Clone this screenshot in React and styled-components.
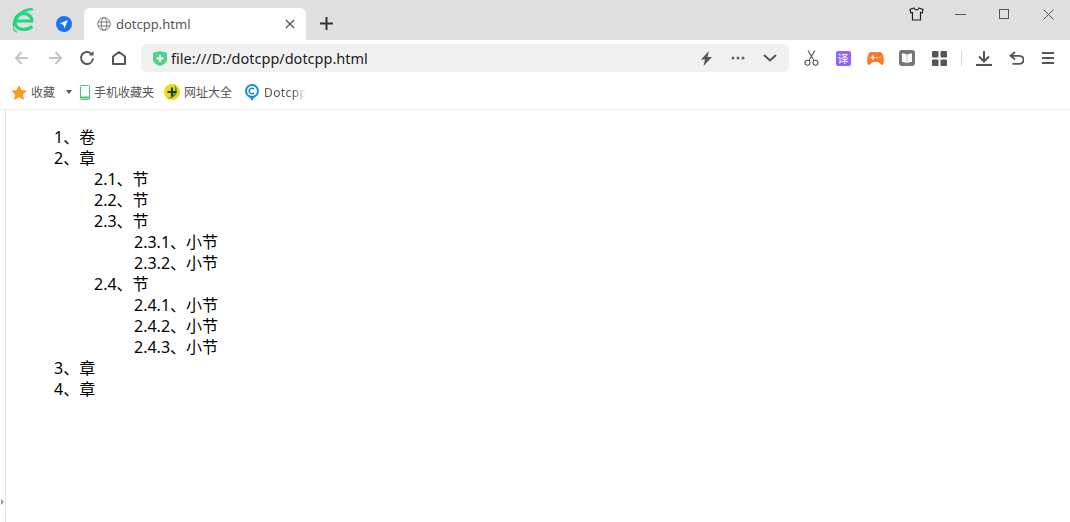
import React from 'react'
import styled, { createGlobalStyle } from 'styled-components'

function App() {
  return (
    <Page>
      <GlobalStyle />
      <TitleBar>
        <Logo viewBox="0 0 22 25">
          <path d="M3 13h16.800C20 8.500 16 5.500 11.500 5.500 6.500 5.500 3 9 3 13.500c0 5 3.500 8 8.500 8 3.500 0 6.500-1 8.800-3.200" fill="none" stroke="#1fd880" strokeWidth="3.200" />
          <path d="M1.500 20.500C-2 11 7 1 19 0c1.400-.1 2.300.6 2.700 2.200C13.500 1.800 5 8 1.500 20.500z" fill="#1fd880" />
          <path d="M1.500 20.500c.5 1.500 1.500 2.800 3.500 3.700" fill="none" stroke="#1fd880" strokeWidth="1.600" />
        </Logo>
        <PinnedTab>
          <svg width="16" height="16" viewBox="0 0 16 16">
            <circle cx="8" cy="8" r="8" fill="#1b73f0" />
            <path d="M12 4 3.800 7.500l3.500 1.200 1.200 3.500z" fill="#fff" />
          </svg>
        </PinnedTab>
        <Tab>
          <svg width="14" height="14" viewBox="0 0 14 14" fill="none" stroke="#777" strokeWidth="1">
            <circle cx="7" cy="7" r="6.300" />
            <ellipse cx="7" cy="7" rx="2.800" ry="6.300" />
            <path d="M1 5h12M1 9h12" />
          </svg>
          <TabTitle>dotcpp.html</TabTitle>
          <svg width="10" height="10" viewBox="0 0 10 10" stroke="#555" strokeWidth="1.400">
            <path d="M1 1l8 8M9 1l-8 8" />
          </svg>
        </Tab>
        <NewTab>
          <svg width="13" height="13" viewBox="0 0 13 13" stroke="#333" strokeWidth="2">
            <path d="M6.500 0v13M0 6.500h13" />
          </svg>
        </NewTab>
        <WindowControls>
          <WindowButton>
            <svg width="15" height="14" viewBox="0 0 15 14" fill="none" stroke="#222" strokeWidth="1.200">
              <path d="M5 1 1 2.500 1.800 6 3.500 5.500V13h8V5.500l1.700.5.800-3.500L10 1c-.5 2.500-4.500 2.500-5 0z" />
            </svg>
          </WindowButton>
          <WindowButton>
            <svg width="11" height="1" viewBox="0 0 11 1" stroke="#555"><path d="M0 .5h11" /></svg>
          </WindowButton>
          <WindowButton>
            <svg width="10" height="10" viewBox="0 0 10 10" fill="none" stroke="#555"><rect x=".5" y=".5" width="9" height="9" /></svg>
          </WindowButton>
          <WindowButton>
            <svg width="11" height="11" viewBox="0 0 11 11" stroke="#555"><path d="M.5.500l10 10M10.500.500l-10 10" /></svg>
          </WindowButton>
        </WindowControls>
      </TitleBar>

      <Toolbar>
        <ToolButton>
          <StrokeIcon color="#c4c4c4"><path d="M14 9H2M7.500 3 2 9l5.500 6" /></StrokeIcon>
        </ToolButton>
        <ToolButton>
          <StrokeIcon color="#c4c4c4"><path d="M3 9h12M9.500 3 15 9l-5.500 6" /></StrokeIcon>
        </ToolButton>
        <ToolButton>
          <StrokeIcon color="#555"><path d="M15 9.500A6 6 0 1 1 13 4.500" /><path d="M15.500 2v4.500H11" fill="#555" stroke="none" /></StrokeIcon>
        </ToolButton>
        <ToolButton>
          <StrokeIcon color="#555"><path d="M3 15V7.500L9 3l6 4.500V15z" strokeLinejoin="round" /></StrokeIcon>
        </ToolButton>
        <AddressBar>
          <svg width="14" height="15" viewBox="0 0 14 15">
            <path d="M0 1.800 7 0l7 1.800v6.500C14 11.500 10 14 7 15c-3-1-7-3.500-7-6.700z" fill="#4fd28a" />
            <path d="M7 4v7M3.500 7.500h7" stroke="#fff" strokeWidth="2" />
          </svg>
          <AddressText>file:///D:/dotcpp/dotcpp.html</AddressText>
          <AddressAction>
            <svg width="13" height="15" viewBox="0 0 13 15"><path d="M9 0 1 8.500h4L3.500 15 12 6H7.500z" fill="#555" /></svg>
          </AddressAction>
          <AddressAction>
            <svg width="14" height="4" viewBox="0 0 14 4" fill="#666">
              <circle cx="2" cy="2" r="1.500" /><circle cx="7" cy="2" r="1.500" /><circle cx="12" cy="2" r="1.500" />
            </svg>
          </AddressAction>
          <AddressAction>
            <svg width="14" height="8" viewBox="0 0 14 8" fill="none" stroke="#555" strokeWidth="2"><path d="M1 1l6 5.500L13 1" /></svg>
          </AddressAction>
        </AddressBar>
        <ToolSpacer />
        <ToolButton>
          <svg width="15" height="16" viewBox="0 0 15 16" fill="none" stroke="#555" strokeWidth="1.100">
            <circle cx="3.500" cy="12.800" r="2.500" /><circle cx="11.500" cy="12.800" r="2.500" />
            <path d="M4.800 10.800 11 .5M10.200 10.800 4 .5" />
          </svg>
        </ToolButton>
        <ToolButton>
          <TranslateBadge>译</TranslateBadge>
        </ToolButton>
        <ToolButton>
          <svg width="17" height="13" viewBox="0 0 17 13">
            <path d="M4.500 0h8C15 0 16 2 16.500 5c.6 3.500.6 8-1.500 8-1.500 0-2.500-3-4-3H6c-1.500 0-2.500 3-4 3C0 13-.1 8.500.5 5 1 2 2 0 4.500 0z" fill="#ff7a2a" />
            <path d="M4 5.500h3.400M5.700 3.800v3.400M10 5.500h.01M13 5.500h.01" stroke="#fff" strokeWidth="1.300" strokeLinecap="round" />
          </svg>
        </ToolButton>
        <ToolButton>
          <svg width="16" height="16" viewBox="0 0 16 16">
            <rect width="16" height="16" rx="3" fill="#777" />
            <path d="M3 3.500c2 0 4 .4 5 1.500 1-1.100 3-1.500 5-1.500V12c-2 0-4 .3-5 1.200C7 12.300 5 12 3 12z" fill="#fff" />
            <path d="M8 5v8" stroke="#bbb" />
          </svg>
        </ToolButton>
        <ToolButton>
          <svg width="15" height="15" viewBox="0 0 15 15" fill="#555">
            <rect width="6.500" height="6.500" rx="1" /><rect x="8.500" width="6.500" height="6.500" rx="1" />
            <rect y="8.500" width="6.500" height="6.500" rx="1" /><rect x="8.500" y="8.500" width="6.500" height="6.500" rx="1" />
          </svg>
        </ToolButton>
        <ToolDivider />
        <ToolButton>
          <svg width="16" height="15" viewBox="0 0 16 15" fill="none" stroke="#555" strokeWidth="2">
            <path d="M0 14h16M8 0v10M3 5.500l5 5 5-5" />
          </svg>
        </ToolButton>
        <ToolButton>
          <svg width="15" height="14" viewBox="0 0 15 14" fill="none" stroke="#555" strokeWidth="1.800">
            <path d="M6 1 1.500 4.800 6 8.500M2 4.800h8c6 0 6 8 0 8H3.500" />
          </svg>
        </ToolButton>
        <ToolButton>
          <svg width="12" height="12" viewBox="0 0 12 12" stroke="#555" strokeWidth="2"><path d="M0 1h12M0 6h12M0 11h12" /></svg>
        </ToolButton>
      </Toolbar>

      <Bookmarks>
        <svg width="16" height="15" viewBox="0 0 16 15"><path d="M8 0l2.400 5 5.600.7-4.100 3.800 1.100 5.500L8 12.300 3 15l1.100-5.500L0 5.700 5.600 5z" fill="#ff9a1f" /></svg>
        <FavoritesLabel>收藏</FavoritesLabel>
        <Caret />
        <Bookmark $offset={8}>
          <svg width="10" height="15" viewBox="0 0 10 15" fill="none">
            <rect x=".5" y=".5" width="9" height="14" rx="1" stroke="#45c47a" />
            <path d="M1 12.500h8" stroke="#45c47a" strokeWidth="2" />
          </svg>
          手机收藏夹
        </Bookmark>
        <Bookmark $offset={10}>
          <svg width="16" height="16" viewBox="0 0 16 16">
            <circle cx="8" cy="8" r="8" fill="#f2d81c" />
            <path d="M10 .3A8 8 0 0 1 3 14.300C7 13.500 11 10 11 6 11 4 11 2 10 .3z" fill="#4d9a1e" />
            <path d="M8 3.500v9M3.500 8h9" stroke="#14450f" strokeWidth="2.200" />
          </svg>
          网址大全
        </Bookmark>
        <Bookmark $offset={13} $gap={5}>
          <svg width="14" height="17" viewBox="0 0 14 17">
            <path d="M7 0a7 7 0 0 1 2 13.700L7 17l-2-3.300A7 7 0 0 1 7 0z" fill="#1b8ddb" />
            <circle cx="7" cy="7" r="5" fill="#fff" />
            <path d="M9.100 5.200a2.800 2.800 0 1 0 0 3.600" fill="none" stroke="#1b8ddb" strokeWidth="1.600" />
          </svg>
          <FadedTitle>Dotcpp</FadedTitle>
        </Bookmark>
      </Bookmarks>

      <Main>
        <SideRail>
          <RailHandle />
        </SideRail>
        <Content>
          <Outline>
            <li>1、卷</li>
            <li>
              2、章
              <Outline>
                <li>2.1、节</li>
                <li>2.2、节</li>
                <li>
                  2.3、节
                  <Outline>
                    <li>2.3.1、小节</li>
                    <li>2.3.2、小节</li>
                  </Outline>
                </li>
                <li>
                  2.4、节
                  <Outline>
                    <li>2.4.1、小节</li>
                    <li>2.4.2、小节</li>
                    <li>2.4.3、小节</li>
                  </Outline>
                </li>
              </Outline>
            </li>
            <li>3、章</li>
            <li>4、章</li>
          </Outline>
        </Content>
      </Main>
    </Page>
  )
}

const StrokeIcon = ({ color, children }) => (
  <svg width="18" height="18" viewBox="0 0 18 18" fill="none" stroke={color} strokeWidth="2">
    {children}
  </svg>
)

const GlobalStyle = createGlobalStyle`
  html, body {
    margin: 0;
    padding: 0;
    background: #fff;
  }
  body {
    font-family: "Noto Sans", "Noto Sans CJK SC", sans-serif;
  }
`

const Page = styled.div`
  display: flex;
  flex-direction: column;
  height: 522px;
  overflow: hidden;
`

const TitleBar = styled.div`
  display: flex;
  align-items: flex-end;
  height: 40px;
  background: #e0e0e0;
`

const Logo = styled.svg`
  width: 22px;
  height: 25px;
  margin: 0 0 7px 12px;
  flex: none;
`

const PinnedTab = styled.div`
  display: flex;
  align-items: center;
  justify-content: center;
  width: 16px;
  height: 32px;
  margin-left: 22px;
  flex: none;
`

const Tab = styled.div`
  display: flex;
  align-items: center;
  width: 222px;
  height: 32px;
  margin-left: 12px;
  padding: 0 11px 0 13px;
  box-sizing: border-box;
  background: #fff;
  border-radius: 6px 6px 0 0;
  flex: none;
`

const TabTitle = styled.span`
  flex: 1;
  margin-left: 5px;
  font-size: 13px;
  color: #555;
`

const NewTab = styled.div`
  display: flex;
  align-items: center;
  justify-content: center;
  width: 40px;
  height: 32px;
  padding-bottom: 2px;
  box-sizing: border-box;
  flex: none;
`

const WindowControls = styled.div`
  display: flex;
  align-self: flex-start;
  margin-left: auto;
  height: 28px;
`

const WindowButton = styled.div`
  display: flex;
  align-items: center;
  justify-content: center;
  width: 44px;
  height: 28px;
`

const Toolbar = styled.div`
  display: flex;
  align-items: center;
  height: 40px;
  padding: 0 6px 4px 7px;
  box-sizing: border-box;
  background: #fff;
`

const ToolButton = styled.div`
  display: flex;
  align-items: center;
  justify-content: center;
  width: 32px;
  height: 32px;
  flex: none;
`

const AddressBar = styled.div`
  display: flex;
  align-items: center;
  width: 648px;
  height: 28px;
  margin-left: 6px;
  padding: 0 3px 0 12px;
  box-sizing: border-box;
  background: #f1f1f1;
  border-radius: 5px;
  flex: none;
`

const AddressText = styled.span`
  flex: 1;
  margin-left: 4px;
  font-size: 14.500px;
  color: #222;
`

const AddressAction = styled.div`
  display: flex;
  align-items: center;
  justify-content: center;
  width: 32px;
  height: 28px;
`

const ToolSpacer = styled.div`
  width: 6px;
  flex: none;
`

const TranslateBadge = styled.span`
  display: block;
  width: 15px;
  height: 15px;
  line-height: 15px;
  border-radius: 2px;
  background: #8f66f5;
  color: #fff;
  font-size: 11px;
  text-align: center;
`

const ToolDivider = styled.div`
  width: 1px;
  height: 16px;
  margin: 0 6px;
  background: #d8d8d8;
  flex: none;
`

const Bookmarks = styled.div`
  display: flex;
  align-items: center;
  height: 30px;
  padding: 0 0 5px 11px;
  box-sizing: border-box;
  background: #fff;
  border-bottom: 1px solid #eeeeee;
  font-size: 12px;
  color: #555;
`

const FavoritesLabel = styled.span`
  margin-left: 4px;
`

const Caret = styled.span`
  width: 0;
  height: 0;
  margin-left: 11px;
  border-top: 4px solid #555;
  border-left: 3.500px solid transparent;
  border-right: 3.500px solid transparent;
`

const Bookmark = styled.div`
  display: flex;
  align-items: center;
  gap: ${props => props.$gap || 4}px;
  margin-left: ${props => props.$offset}px;
`

const FadedTitle = styled.span`
  width: 42px;
  overflow: hidden;
  white-space: nowrap;
  letter-spacing: 0.4px;
  -webkit-mask-image: linear-gradient(to right, #000 70%, transparent 100%);
  mask-image: linear-gradient(to right, #000 70%, transparent 100%);
`

const Main = styled.div`
  display: flex;
  flex: 1;
  min-height: 0;
`

const SideRail = styled.div`
  display: flex;
  align-items: flex-end;
  width: 5px;
  border-right: 1px solid #e6e6e6;
  padding-bottom: 17px;
  flex: none;
`

const RailHandle = styled.span`
  width: 0;
  height: 0;
  margin-left: 1px;
  border-left: 3px solid #999;
  border-top: 3px solid transparent;
  border-bottom: 3px solid transparent;
`

const Content = styled.main`
  flex: 1;
  padding: 17px 0 0 8px;
`

const Outline = styled.ul`
  margin: 0;
  padding: 0 0 0 40px;
  list-style: none;
  font-size: 16px;
  line-height: 21px;
  color: #000;
`

export default App
